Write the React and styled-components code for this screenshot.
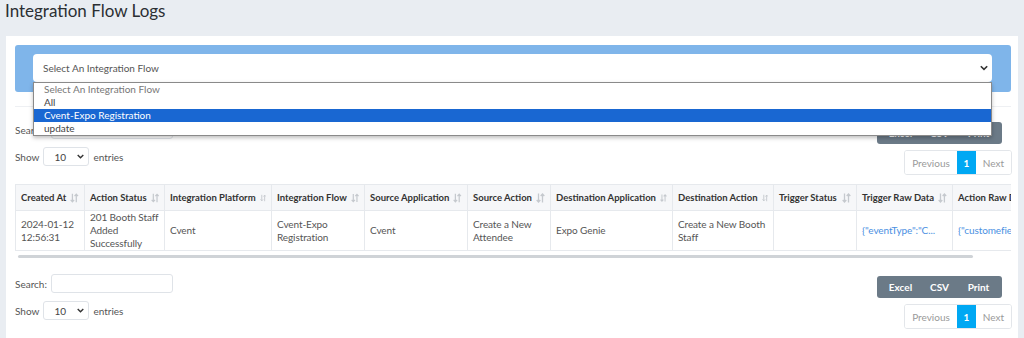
import React from 'react'
import styled, { createGlobalStyle } from 'styled-components'

const GlobalStyle = createGlobalStyle`
  body {
    margin: 0;
    background: #e9edf2;
    font-family: Lato, "Open Sans", sans-serif;
    color: #555;
  }
`

const columns = [
  { title: 'Created At', width: 69 },
  { title: 'Action Status', width: 80 },
  { title: 'Integration Platform', width: 107 },
  { title: 'Integration Flow', width: 93 },
  { title: 'Source Application', width: 103 },
  { title: 'Source Action', width: 83 },
  { title: 'Destination Application', width: 122 },
  { title: 'Destination Action', width: 101 },
  { title: 'Trigger Status', width: 83 },
  { title: 'Trigger Raw Data', width: 96 },
  { title: 'Action Raw Data', width: 120 },
]

const row = [
  { text: '2024-01-12 12:56:31' },
  { text: '201 Booth Staff Added Successfully' },
  { text: 'Cvent' },
  { text: 'Cvent-Expo Registration' },
  { text: 'Cvent' },
  { text: 'Create a New Attendee' },
  { text: 'Expo Genie' },
  { text: 'Create a New Booth Staff' },
  { text: '' },
  { text: '{"eventType":"C...', link: true },
  { text: '{"customefields":[...', link: true },
]

const SortIcon = () => (
  <svg width="9" height="10" viewBox="0 0 9 10" fill="none" stroke="#c5c9ce" strokeWidth="1.3">
    <path d="M2.5 0.5v8.5M0.7 7l1.8 2 1.8-2" />
    <path d="M6.5 9.5V1M4.7 3l1.8-2 1.8 2" />
  </svg>
)

const Chevron = ({ size = 7 }) => (
  <svg width={size} height={size * 0.7} viewBox="0 0 10 7" fill="none" stroke="#333" strokeWidth="2">
    <path d="M1 1.5l4 4 4-4" />
  </svg>
)

const Controls = () => (
  <ControlsRow>
    <LeftCol>
      <Label>
        Search: <SearchInput />
      </Label>
      <Label>
        Show
        <SmallSelect>
          10 <Chevron size={7} />
        </SmallSelect>
        entries
      </Label>
    </LeftCol>
    <RightCol>
      <ButtonGroup>
        <ExportButton>Excel</ExportButton>
        <ExportButton>CSV</ExportButton>
        <ExportButton>Print</ExportButton>
      </ButtonGroup>
      <Pager>
        <PageItem $w={52}>Previous</PageItem>
        <PageItem $w={19} $active>1</PageItem>
        <PageItem $w={35}>Next</PageItem>
      </Pager>
    </RightCol>
  </ControlsRow>
)

export default function App() {
  return (
    <>
      <GlobalStyle />
      <Title>Integration Flow Logs</Title>
      <Card>
        <FilterBand>
          <SelectBox>
            Select An Integration Flow
            <Chevron size={8} />
            <OptionList>
              <Option $muted>Select An Integration Flow</Option>
              <Option>All</Option>
              <Option $selected>Cvent-Expo Registration</Option>
              <Option>update</Option>
            </OptionList>
          </SelectBox>
        </FilterBand>
        <Divider />
        <TopControls>
          <Controls />
        </TopControls>
        <TableWrap>
          <Table>
            <colgroup>
              {columns.map((c) => (
                <col key={c.title} style={{ width: c.width }} />
              ))}
            </colgroup>
            <thead>
              <tr>
                {columns.map((c) => (
                  <Th key={c.title}>
                    <HeadInner>
                      <span>{c.title}</span>
                      <SortIcon />
                    </HeadInner>
                  </Th>
                ))}
              </tr>
            </thead>
            <tbody>
              <tr>
                {row.map((cell, i) => (
                  <Td key={i}>
                    <CellText $link={cell.link}>{cell.text}</CellText>
                  </Td>
                ))}
              </tr>
            </tbody>
          </Table>
        </TableWrap>
        <ScrollTrack>
          <ScrollThumb />
        </ScrollTrack>
        <BottomControls>
          <Controls />
        </BottomControls>
      </Card>
    </>
  )
}

const Title = styled.h1`
  margin: 0;
  padding: 0 5px;
  height: 36px;
  line-height: 22px;
  font-size: 17px;
  font-weight: 400;
  color: #2b2f33;
`

const Card = styled.div`
  margin-left: 6px;
  width: 1012px;
  background: #fff;
  padding: 9px 6px 20px 9px;
  box-sizing: border-box;
`

const FilterBand = styled.div`
  background: #7fb5ea;
  border-radius: 3px;
  height: 47px;
  margin-right: 1px;
  padding: 9px 19px 0 18px;
  box-sizing: border-box;
`

const SelectBox = styled.div`
  position: relative;
  height: 28px;
  background: #fff;
  border-radius: 4px;
  display: flex;
  align-items: center;
  justify-content: space-between;
  padding: 0 4px 0 10px;
  font-size: 10px;
  color: #555;
`

const OptionList = styled.div`
  position: absolute;
  top: 28px;
  left: 0;
  right: 0;
  background: #fff;
  border: 1px solid #8a8a8a;
  box-shadow: 0 2px 4px rgba(0, 0, 0, 0.25);
  z-index: 5;
`

const Option = styled.div`
  height: 13px;
  line-height: 13px;
  padding-left: 10px;
  font-size: 10px;
  color: ${(p) => (p.$selected ? '#fff' : p.$muted ? '#777' : '#444')};
  background: ${(p) => (p.$selected ? '#1967d2' : 'transparent')};
`

const Divider = styled.div`
  margin-top: 14px;
  margin-right: 1px;
  border-top: 1px solid #eef0f3;
`

const TopControls = styled.div`
  margin-top: 13px;
`

const BottomControls = styled.div`
  margin-top: 16px;
`

const ControlsRow = styled.div`
  display: flex;
  justify-content: space-between;
`

const LeftCol = styled.div`
  display: flex;
  flex-direction: column;
  gap: 8px;
`

const RightCol = styled.div`
  display: flex;
  flex-direction: column;
  align-items: flex-end;
  gap: 6px;
  padding-top: 2px;
`

const Label = styled.div`
  display: flex;
  align-items: center;
  gap: 4px;
  height: 19px;
  font-size: 10px;
  color: #555;
`

const SearchInput = styled.div`
  width: 120px;
  height: 17px;
  border: 1px solid #dfe3e8;
  border-radius: 3px;
`

const SmallSelect = styled.div`
  width: 30px;
  height: 17px;
  border: 1px solid #dfe3e8;
  border-radius: 3px;
  display: flex;
  align-items: center;
  justify-content: space-between;
  padding: 0 4px 0 10px;
  font-size: 10px;
  color: #444;
`

const ButtonGroup = styled.div`
  display: flex;
  align-items: center;
  height: 22px;
  margin-right: 10px;
  background: #6b7a87;
  border-radius: 3px;
  padding: 0 4px;
`

const ExportButton = styled.div`
  width: 39px;
  text-align: center;
  font-size: 10px;
  font-weight: 700;
  color: #fff;
`

const Pager = styled.div`
  display: flex;
  height: 23px;
  border: 1px solid #e3e6ea;
  border-radius: 3px;
  overflow: hidden;
`

const PageItem = styled.div`
  width: ${(p) => p.$w}px;
  display: flex;
  align-items: center;
  justify-content: center;
  font-size: 10px;
  color: ${(p) => (p.$active ? '#fff' : '#9a9a9a')};
  background: ${(p) => (p.$active ? '#00a8f3' : '#fff')};
  font-weight: ${(p) => (p.$active ? 700 : 400)};
`

const TableWrap = styled.div`
  margin-top: 9px;
  margin-right: 1px;
  overflow: hidden;
`

const Table = styled.table`
  border-collapse: collapse;
  table-layout: fixed;
  width: 1057px;
`

const Th = styled.th`
  height: 25px;
  padding: 0 5px;
  background: #f6f7f9;
  border: 1px solid #e6e9ed;
  font-size: 9.5px;
  font-weight: 700;
  color: #333;
  text-align: left;
  white-space: nowrap;
  overflow: hidden;
`

const HeadInner = styled.div`
  display: flex;
  align-items: center;
  justify-content: space-between;
  gap: 4px;
`

const Td = styled.td`
  height: 39px;
  padding: 0 3px 0 5px;
  border: 1px solid #e6e9ed;
  vertical-align: middle;
`

const CellText = styled.div`
  font-size: 10px;
  line-height: 13px;
  letter-spacing: -0.1px;
  color: ${(p) => (p.$link ? '#4a90e2' : '#555')};
  white-space: ${(p) => (p.$link ? 'nowrap' : 'normal')};
`

const ScrollTrack = styled.div`
  margin-top: 4px;
  padding-left: 3px;
  height: 3px;
`

const ScrollThumb = styled.div`
  width: 955px;
  height: 3px;
  border-radius: 2px;
  background: #cfd3d7;
`
